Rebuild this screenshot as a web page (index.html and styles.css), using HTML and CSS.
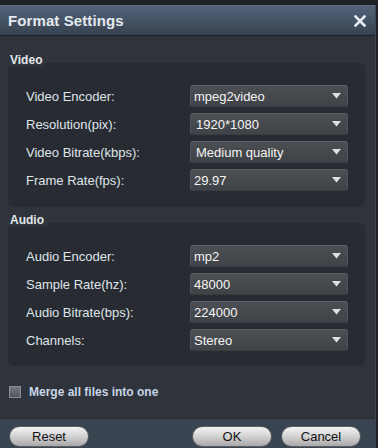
FILE: index.html
```html
<!DOCTYPE html>
<html>
<head>
<meta charset="utf-8">
<link rel="stylesheet" href="styles.css">
</head>
<body>
<div class="dialog">
  <div class="titlebar">
    <span class="title">Format Settings</span>
    <svg class="close" width="12" height="12" viewBox="0 0 12 12"><path d="M1.5 1.5 L10.5 10.5 M10.5 1.5 L1.5 10.5" stroke="#e8ecf1" stroke-width="2.6" stroke-linecap="square"/></svg>
  </div>
  <div class="content">
    <div class="section">
      <div class="legend">Video</div>
      <div class="group">
        <div class="row"><span class="label">Video Encoder:</span><div class="combo"><span>mpeg2video</span><svg width="9" height="6" viewBox="0 0 9 6"><polygon points="0,0 9,0 4.5,5.5" fill="#dfe1e4"/></svg></div></div>
        <div class="row"><span class="label">Resolution(pix):</span><div class="combo"><span class="shift">1920*1080</span><svg width="9" height="6" viewBox="0 0 9 6"><polygon points="0,0 9,0 4.5,5.5" fill="#dfe1e4"/></svg></div></div>
        <div class="row"><span class="label">Video Bitrate(kbps):</span><div class="combo"><span class="shift">Medium quality</span><svg width="9" height="6" viewBox="0 0 9 6"><polygon points="0,0 9,0 4.5,5.5" fill="#dfe1e4"/></svg></div></div>
        <div class="row"><span class="label">Frame Rate(fps):</span><div class="combo"><span>29.97</span><svg width="9" height="6" viewBox="0 0 9 6"><polygon points="0,0 9,0 4.5,5.5" fill="#dfe1e4"/></svg></div></div>
      </div>
    </div>
    <div class="section audio">
      <div class="legend">Audio</div>
      <div class="group">
        <div class="row"><span class="label">Audio Encoder:</span><div class="combo"><span>mp2</span><svg width="9" height="6" viewBox="0 0 9 6"><polygon points="0,0 9,0 4.5,5.5" fill="#dfe1e4"/></svg></div></div>
        <div class="row"><span class="label">Sample Rate(hz):</span><div class="combo"><span>48000</span><svg width="9" height="6" viewBox="0 0 9 6"><polygon points="0,0 9,0 4.5,5.5" fill="#dfe1e4"/></svg></div></div>
        <div class="row"><span class="label">Audio Bitrate(bps):</span><div class="combo"><span>224000</span><svg width="9" height="6" viewBox="0 0 9 6"><polygon points="0,0 9,0 4.5,5.5" fill="#dfe1e4"/></svg></div></div>
        <div class="row"><span class="label">Channels:</span><div class="combo"><span>Stereo</span><svg width="9" height="6" viewBox="0 0 9 6"><polygon points="0,0 9,0 4.5,5.5" fill="#dfe1e4"/></svg></div></div>
      </div>
    </div>
    <div class="merge">
      <span class="checkbox"></span>
      <span class="merge-text">Merge all files into one</span>
    </div>
  </div>
  <div class="footer">
    <button class="btn">Reset</button>
    <div class="right">
      <button class="btn">OK</button>
      <button class="btn">Cancel</button>
    </div>
  </div>
</div>
</body>
</html>
```
FILE: styles.css
```css
html, body {
  margin: 0;
  padding: 0;
}
body {
  background: #1d2228;
  font-family: "Liberation Sans", Arial, sans-serif;
  width: 378px;
  height: 448px;
  overflow: hidden;
}
.dialog {
  margin-top: 5px;
  width: 375px;
  background: #2f343c;
  border-right: 1px solid #3e4652;
}
.titlebar {
  height: 29px;
  background: linear-gradient(#526279, #37424f);
  border-top: 1px solid #5d6d84;
  border-bottom: 1px solid #1c2127;
  display: flex;
  align-items: center;
  justify-content: space-between;
  padding: 0 9px 0 8px;
}
.title {
  color: #e4e9ef;
  font-weight: bold;
  font-size: 15px;
  letter-spacing: 0.1px;
}
.close {
  display: block;
  margin-top: 1px;
}
.content {
  padding-top: 18px;
}
.section {
  margin: 0 10px 0 8px;
}
.section.audio {
  margin-top: 7px;
}
.legend {
  position: relative;
  z-index: 1;
  width: fit-content;
  background: #2f343c;
  color: #e2e6eb;
  font-weight: bold;
  font-size: 12px;
  line-height: 13px;
  padding: 0 3px 0 2px;
}
.group {
  margin-top: -4px;
  background: #282c32;
  border-radius: 6px;
  padding: 22px 17px 16px 18px;
  display: flex;
  flex-direction: column;
  gap: 6px;
}
.audio .group {
  padding-bottom: 15px;
}
.row {
  display: flex;
  align-items: center;
  justify-content: space-between;
  height: 22px;
}
.label {
  color: #dfe4ea;
  font-size: 13px;
}
.combo {
  height: 20px;
  border: 1px solid #505358;
  border-top-color: #5a5d62;
  border-bottom-color: #3a3d42;
  border-radius: 3px;
  background: linear-gradient(#4b4e53, #3f4247);
  display: flex;
  align-items: center;
  justify-content: space-between;
  padding: 0 6px 0 3px;
  box-sizing: content-box;
  width: 147px;
  color: #f4f4f4;
  font-size: 13px;
}
.combo .shift {
  padding-left: 2px;
}
.combo svg {
  display: block;
}
.merge {
  display: flex;
  align-items: center;
  gap: 8px;
  height: 12px;
  padding: 20px 0 20px 9px;
  line-height: 12px;
}
.checkbox {
  width: 10px;
  height: 10px;
  border: 1px solid #8a8e94;
  background: linear-gradient(#75797f, #53575d);
}
.merge-text {
  color: #c8d5e5;
  font-weight: bold;
  font-size: 12px;
}
.footer {
  border-top: 1px solid #262b31;
  background: #3a4350;
  display: flex;
  justify-content: space-between;
  padding: 7px 14px 10px 9px;
}
.right {
  display: flex;
  gap: 9px;
}
.btn {
  width: 80px;
  height: 21px;
  border-radius: 11px;
  border: 1px solid #5c5f63;
  background: linear-gradient(#f4f4f4, #d6d6d6 45%, #a9a9a9);
  color: #121212;
  font-family: "Liberation Sans", Arial, sans-serif;
  font-size: 13px;
  padding: 0;
  line-height: 19px;
}
```
